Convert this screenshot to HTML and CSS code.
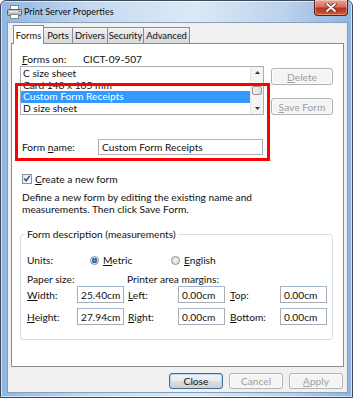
FILE: index.html
```html
<!DOCTYPE html>
<html lang="en">

<head>
	<title>Print Server Properties</title>
	<meta charset="UTF-8">
	<meta name="viewport" content="width=device-width, initial-scale=1.0">
	<link rel="stylesheet" href="styles.css">
</head>

<body>
	<div class="window">
		<div class="titlebar">
			<svg class="app-icon" width="15" height="14" viewBox="0 0 15 14">
				<rect x="3.5" y="0.5" width="8" height="5" fill="#fff" stroke="#8a8a8a"/>
				<rect x="0.5" y="4.5" width="14" height="6" rx="1" fill="#b9bec4" stroke="#5c6168"/>
				<rect x="2" y="6" width="11" height="1.5" fill="#e6e8ea"/>
				<rect x="3.5" y="9.5" width="8" height="4" fill="#fff" stroke="#8a8a8a"/>
				<rect x="11.5" y="6" width="1.5" height="1" fill="#3a9a3a"/>
			</svg>
			<span class="title">Print Server Properties</span>
			<div class="close-btn">
				<svg width="12" height="9" viewBox="0 0 12 9">
					<path d="M2 1 L10 8 M10 1 L2 8" stroke="#6b2a20" stroke-width="3.4" stroke-linecap="round"/>
					<path d="M2 1 L10 8 M10 1 L2 8" stroke="#fff" stroke-width="1.8" stroke-linecap="round"/>
				</svg>
			</div>
		</div>

		<div class="client">
			<div class="tabs">
				<div class="tab active">Forms</div>
				<div class="tab tab-ports">Ports</div>
				<div class="tab tab-drivers">Drivers</div>
				<div class="tab tab-security">Security</div>
				<div class="tab tab-advanced">Advanced</div>
			</div>

			<div class="panel">
				<div class="forms-on">
					<span class="forms-on-label"><u>F</u>orms on:</span>
					<span>CICT-09-507</span>
				</div>

				<div class="list-row">
					<div class="listbox">
						<div class="items">
							<div class="item">C size sheet</div>
							<div class="item">Card 148 x 105 mm</div>
							<div class="item selected">Custom Form Receipts</div>
							<div class="item">D size sheet</div>
						</div>
						<div class="vscroll">
							<div class="arrow">
								<svg width="5" height="3" viewBox="0 0 5 3"><path d="M0 3 L2.5 0 L5 3Z" fill="#333"/></svg>
							</div>
							<div class="track">
								<div class="thumb"></div>
							</div>
							<div class="arrow">
								<svg width="5" height="3" viewBox="0 0 5 3"><path d="M0 0 L2.5 3 L5 0Z" fill="#333"/></svg>
							</div>
						</div>
					</div>
					<div class="side-btns">
						<div class="btn disabled"><u>D</u>elete</div>
						<div class="btn disabled"><u>S</u>ave Form</div>
					</div>
				</div>

				<div class="name-row">
					<span class="name-label">Form <u>n</u>ame:</span>
					<div class="field name-field">Custom Form Receipts</div>
				</div>

				<div class="check-row">
					<div class="checkbox">
						<svg width="9" height="9" viewBox="0 0 9 9"><path d="M1.5 4.5 L3.5 7 L7.5 1.5" stroke="#2a4a8a" stroke-width="1.6" fill="none"/></svg>
					</div>
					<span><u>C</u>reate a new form</span>
				</div>

				<p class="help">Define a new form by editing the existing name and<br>measurements. Then click Save Form.</p>

				<div class="group">
					<span class="legend">Form description (measurements)</span>
					<div class="units-row">
						<span class="units-label">Units:</span>
						<span class="radio checked"></span>
						<span class="radio-text"><u>M</u>etric</span>
						<span class="radio"></span>
						<span class="radio-text"><u>E</u>nglish</span>
					</div>
					<div class="size-head">
						<span class="paper-label">Paper size:</span>
						<span>Printer area margins:</span>
					</div>
					<div class="measure-grid">
						<span><u>W</u>idth:</span>
						<div class="field small">25.40cm</div>
						<span><u>L</u>eft:</span>
						<div class="field small">0.00cm</div>
						<span><u>T</u>op:</span>
						<div class="field small">0.00cm</div>

						<span><u>H</u>eight:</span>
						<div class="field small">27.94cm</div>
						<span><u>R</u>ight:</span>
						<div class="field small">0.00cm</div>
						<span><u>B</u>ottom:</span>
						<div class="field small">0.00cm</div>
					</div>
				</div>

				<!-- red annotation box drawn over the dialog -->
				<div class="highlight"></div>
			</div>

			<div class="footer">
				<div class="btn default">Close</div>
				<div class="btn disabled">Cancel</div>
				<div class="btn disabled"><u>A</u>pply</div>
			</div>
		</div>
	</div>
</body>

</html>
```

FILE: styles.css
```css
* {
	box-sizing: border-box;
}

body {
	margin: 0;
	width: 355px;
	height: 400px;
	background: #fff;
	font-family: Lato, "Noto Sans", sans-serif;
	font-size: 10.2px;
	color: #111;
}

u {
	text-decoration: underline;
	text-underline-offset: 1px;
}

.window {
	width: 353px;
	height: 398px;
	border: 1px solid #3d4b5c;
	border-radius: 6px 6px 0 0;
	background: linear-gradient(90deg, #8fb6e2 0%, #c4d9ef 25%, #dce9f6 55%, #bcd3ec 80%, #8fb3df 100%);
	padding: 0 4px 4px 6px;
	display: flex;
	flex-direction: column;
	box-shadow: inset 0 0 0 1px rgba(255, 255, 255, 0.6);
}

.titlebar {
	height: 21px;
	display: flex;
	align-items: center;
	flex-shrink: 0;
}

.app-icon {
	margin-top: 1px;
}

.title {
	margin-left: 2px;
	font-size: 9px;
	color: #0c0c0c;
}

.close-btn {
	margin-left: auto;
	align-self: flex-start;
	width: 34px;
	height: 16px;
	margin-top: -1px;
	border: 1px solid #5a2117;
	border-top: none;
	border-radius: 0 0 4px 4px;
	background: linear-gradient(#e8a493 0%, #d0705c 45%, #b8321c 55%, #d05a3a 100%);
	display: flex;
	align-items: center;
	justify-content: center;
	box-shadow: inset 0 0 0 1px rgba(255, 255, 255, 0.35);
}

.client {
	flex: 1;
	background: #f0f0f0;
	border: 1px solid #84a0bd;
	display: flex;
	flex-direction: column;
	padding: 0 3px;
}

/* tabs */
.tabs {
	display: flex;
	align-items: flex-end;
	height: 20px;
	padding-left: 2px;
	position: relative;
	z-index: 1;
	font-size: 9.4px;
}

.tab {
	height: 16px;
	border: 1px solid #898c95;
	border-bottom: none;
	border-left: none;
	background: linear-gradient(#f3f3f3, #e3e3e3 50%, #d9d9d9);
	display: flex;
	align-items: center;
	justify-content: center;
}

.tab.active {
	width: 31px;
	height: 19px;
	border-left: 1px solid #898c95;
	background: #fff;
	margin-bottom: -1px;
}

.tab-ports {
	width: 29px;
}

.tab-drivers {
	width: 35px;
}

.tab-security {
	width: 36px;
}

.tab-advanced {
	width: 46px;
}

.panel {
	height: 324px;
	background: #fff;
	border: 1px solid #898c95;
	position: relative;
	padding: 9px 0 0 8px;
}

.forms-on {
	display: flex;
	height: 12px;
	align-items: center;
	padding-left: 2px;
}

.forms-on-label {
	width: 61px;
}

.list-row {
	display: flex;
	margin-top: 1px;
}

.listbox {
	width: 244px;
	height: 49px;
	border: 1px solid #abadb3;
	display: flex;
}

.items {
	flex: 1;
	padding-top: 1px;
}

.item {
	height: 11.5px;
	line-height: 11.5px;
	padding-left: 2px;
}

.item.selected {
	background: #3399ff;
	color: #fff;
}

.vscroll {
	width: 13px;
	display: flex;
	flex-direction: column;
	background: #f4f4f4;
	border-left: 1px solid #e8e8e8;
}

.arrow {
	height: 11px;
	display: flex;
	align-items: center;
	justify-content: center;
}

.track {
	flex: 1;
	padding-top: 8px;
}

.thumb {
	height: 9px;
	margin: 0 1px;
	border: 1px solid #979797;
	border-radius: 2px;
	background: linear-gradient(90deg, #f2f2f2, #dadada);
}

.side-btns {
	display: flex;
	flex-direction: column;
	gap: 13px;
	margin-left: 7px;
	padding-top: 2px;
}

.btn {
	width: 62px;
	height: 17px;
	border: 1px solid #707070;
	border-radius: 3px;
	display: flex;
	align-items: center;
	justify-content: center;
	background: linear-gradient(#f2f2f2 0%, #ebebeb 48%, #dddddd 52%, #cfcfcf 100%);
	box-shadow: inset 0 0 0 1px rgba(255, 255, 255, 0.8);
}

.btn.disabled {
	border-color: #adb2b5;
	background: #f4f4f4;
	color: #a0a0a0;
}

.name-row {
	display: flex;
	align-items: center;
	margin-top: 24px;
	padding-left: 2px;
}

.name-label {
	width: 76px;
}

.field {
	height: 16px;
	border: 1px solid #abadb3;
	border-top-color: #a4b8d0;
	display: flex;
	align-items: center;
	padding-left: 3px;
	background: #fff;
}

.name-field {
	width: 165px;
}

.check-row {
	display: flex;
	align-items: center;
	margin-top: 18px;
	padding-left: 2px;
	height: 11px;
}

.checkbox {
	width: 10px;
	height: 10px;
	border: 1px solid #8e8f8f;
	background: linear-gradient(135deg, #e6e6e6, #fdfdfd);
	margin-right: 3px;
	display: flex;
	align-items: center;
	justify-content: center;
}

.help {
	margin: 7px 0 0 2px;
	line-height: 12px;
}

.group {
	position: relative;
	width: 313px;
	height: 106px;
	margin-top: 19px;
	border: 1px solid #d5dfe5;
	border-radius: 3px;
	padding: 19px 0 0 6px;
}

.legend {
	position: absolute;
	top: -7px;
	left: 4px;
	background: #fff;
	padding: 0 2px;
}

.units-row {
	display: flex;
	align-items: center;
	height: 12px;
}

.units-label {
	width: 63px;
}

.radio {
	width: 9px;
	height: 9px;
	border-radius: 50%;
	border: 1px solid #8e8f8f;
	background: radial-gradient(circle, #f4f4f4, #d6d6d6);
}

.radio.checked {
	background: radial-gradient(circle, #4aa3e0 0, #1f63a8 2.5px, #e8e8e8 3px, #f4f4f4 100%);
}

.radio-text {
	margin-left: 4px;
	width: 68px;
}

.size-head {
	display: flex;
	margin-top: 7px;
	height: 12px;
	align-items: center;
}

.paper-label {
	width: 100px;
}

.measure-grid {
	display: grid;
	grid-template-columns: 50px 51px 50px 52px 50px 47px;
	row-gap: 5px;
	align-items: center;
	margin-top: 1px;
}

.field.small {
	width: 47px;
	height: 17px;
}

.highlight {
	position: absolute;
	left: 3px;
	top: 39px;
	width: 255px;
	height: 78px;
	border: 3px solid #ff0000;
}

.footer {
	display: flex;
	justify-content: flex-end;
	gap: 6px;
	margin-top: 6px;
	padding-right: 1px;
}

.footer .btn {
	width: 54px;
	height: 16px;
}

.btn.default {
	border-color: #3c6d99;
	box-shadow: inset 0 0 0 1px #b8d6ee;
}
```
